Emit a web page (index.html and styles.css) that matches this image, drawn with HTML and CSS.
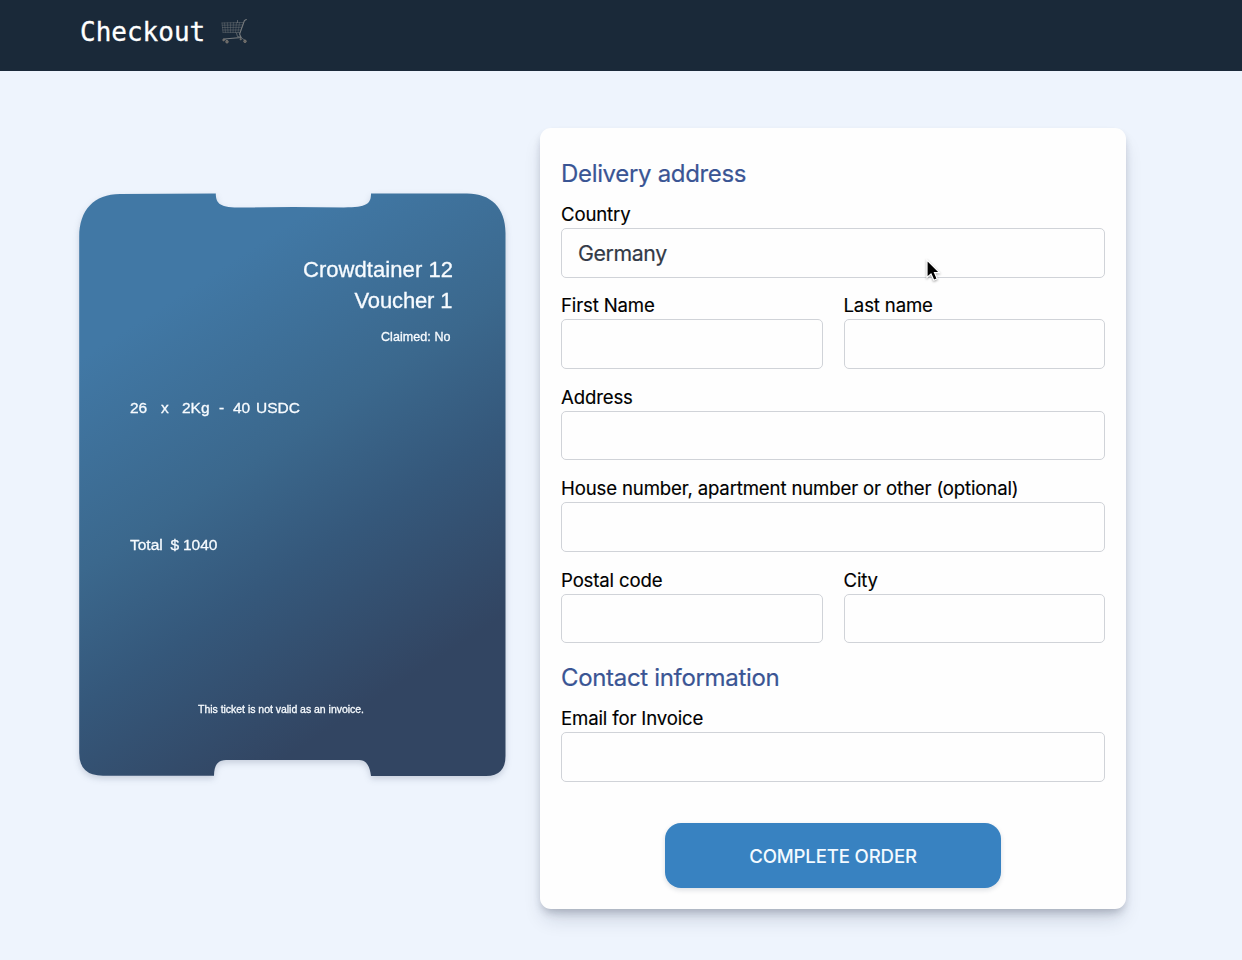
FILE: index.html
```html
<!DOCTYPE html>
<html lang="en">
<head>
<meta charset="utf-8">
<title>Checkout</title>
<link rel="stylesheet" href="styles.css">
</head>
<body>
<header class="topbar">
  <h1 class="topbar-title">Checkout</h1>
  <svg class="cart" viewBox="0 0 30 30" aria-hidden="true">
    <g fill="none" stroke="#777b7e" stroke-width="0.7" stroke-linecap="round">
      <path d="M27.3 3.5 L25.4 4.6 L20.6 18 L22 21.5 L5 23" stroke-width="1.1"/>
      <path d="M3 7 L24.3 6.5 M3.2 9.200 L24 8.9 M3.4 11.5 L23 11.3 M3.7 14 L22 14 M4 16.3 L21 16.5" opacity="0.65"/>
      <path d="M3 7 L4 16.3 M5.5 7 L6.5 16.3 M8.5 6.9 L9 16.3 M11.5 6.8 L11.5 16.4 M14.5 6.7 L14 16.4 M17.5 6.7 L16.5 16.5 M20.5 6.6 L19 16.5" opacity="0.55"/>
      <path d="M17.5 17 L18.5 20.5 L22 21 M18.5 4.5 V6.5 M22 21.5 L26.2 24.5 M5 23 L8 24.5"/>
    </g>
    <g fill="#626262" stroke="#857f79" stroke-width="0.7">
      <circle cx="4.6" cy="24" r="0.9"/><circle cx="8" cy="25.8" r="1.3"/><circle cx="21.7" cy="23.2" r="0.7"/><circle cx="26" cy="25.3" r="1.3"/>
    </g>
  </svg>
</header>
<main class="content">
  <svg class="ticket" viewBox="0 0 427 583" role="img" aria-label="Voucher">
    <defs>
      <linearGradient id="ticket-fill" gradientUnits="userSpaceOnUse" x1="0" y1="167" x2="243" y2="541">
        <stop offset="0" stop-color="#4178a5"/>
        <stop offset="0.4" stop-color="#3b688d"/>
        <stop offset="0.65" stop-color="#35587b"/>
        <stop offset="1" stop-color="#324562"/>
      </linearGradient>
    </defs>
    <path fill="url(#ticket-fill)" d="M41 1 L136.800 0.400 C137 11 141 14.500 163 14.500 Q214 13.500 265 14.500 C288 14.500 292 11 292 0.600 L388 0.600 C412 0.600 426.500 15 426.500 40 V563 Q426.500 583 407 583 H292 C291 574 288 567 280 567 H147 C139 567 135 572 135 582.700 H24 Q0.200 582.700 0.200 560 V44 C0.200 17 15 1 41 1 Z"/>
    <g class="ticket-text">
      <text x="224" y="84" font-size="22" textLength="150">Crowdtainer 12</text>
      <text x="275.500" y="115" font-size="22" textLength="98">Voucher 1</text>
      <text x="302" y="148" font-size="12.500" textLength="69.500" class="small">Claimed: No</text>
      <text y="220" font-size="15.500"><tspan x="51">26</tspan><tspan x="82">x</tspan><tspan x="103">2Kg</tspan><tspan x="140">-</tspan><tspan x="154">40</tspan><tspan x="177" textLength="44">USDC</tspan></text>
      <text y="356.500" font-size="15.500"><tspan x="51">Total</tspan><tspan x="91.500">$</tspan><tspan x="104">1040</tspan></text>
      <text x="119" y="520" font-size="10.500" textLength="166" class="small">This ticket is not valid as an invoice.</text>
    </g>
  </svg>
  <form class="card">
    <h2 class="section-title">Delivery address</h2>
    <div class="fields">
      <label class="field wide"><span class="label">Country</span><span class="input">Germany</span></label>
      <label class="field"><span class="label">First Name</span><span class="input"></span></label>
      <label class="field"><span class="label">Last name</span><span class="input"></span></label>
      <label class="field wide"><span class="label">Address</span><span class="input"></span></label>
      <label class="field wide"><span class="label">House number, apartment number or other (optional)</span><span class="input"></span></label>
      <label class="field"><span class="label">Postal code</span><span class="input"></span></label>
      <label class="field"><span class="label">City</span><span class="input"></span></label>
    </div>
    <h2 class="section-title contact">Contact information</h2>
    <div class="fields">
      <label class="field wide"><span class="label">Email for Invoice</span><span class="input"></span></label>
    </div>
    <button class="submit" type="button">COMPLETE ORDER</button>
  </form>
</main>
<svg class="cursor" viewBox="0 0 20 28" aria-hidden="true">
  <path d="M3 2 V19.500 L7 15.900 L9.800 22.200 L13.200 20.700 L10.500 14.600 H15.500 Z" fill="#000" stroke="#fff" stroke-width="1.200"/>
</svg>
</body>
</html>
```
FILE: styles.css
```css
* { box-sizing: border-box; }

body {
  margin: 0;
  height: 960px;
  overflow: hidden;
  background: #eef4fd;
  font-family: Inter, "Liberation Sans", sans-serif;
  color: #000;
}

.topbar {
  display: flex;
  align-items: flex-start;
  gap: 14px;
  height: 71px;
  padding: 16px 80px 0;
  background: #1a2939;
}

.topbar-title {
  margin: 0;
  font: 400 26px/32px "DejaVu Sans Mono", monospace;
  color: #fff;
  -webkit-text-stroke: 0.3px #fff;
}

.cart { width: 30px; height: 30px; }

.content {
  display: flex;
  align-items: flex-start;
  gap: 34px;
  padding: 57px 0 0 79px;
}

.ticket {
  flex: none;
  width: 427px;
  height: 583px;
  margin-top: 65px;
  overflow: visible;
  filter: drop-shadow(0 3px 3px rgba(30, 45, 80, 0.18));
}

.ticket-text {
  fill: #f7fbff;
  font-family: "Liberation Sans", Arial, sans-serif;
  stroke: #f7fbff;
  stroke-width: 0.3px;
}

.card {
  width: 586px;
  height: 781px;
  padding: 30px 21px 21px;
  border-radius: 11px;
  background: #fefefe;
  box-shadow: 0 13px 20px -4px rgba(20, 30, 60, 0.16), 0 5px 9px -2px rgba(20, 30, 50, 0.24);
}

.section-title {
  margin: 0 0 10.500px;
  font-size: 24px;
  font-weight: 400;
  line-height: 32.500px;
  letter-spacing: -0.330px;
  color: #3a5594;
  -webkit-text-stroke: 0.2px #3a5594;
}

.contact { margin-top: 19px; }

.fields {
  display: grid;
  grid-template-columns: 1fr 1fr;
  gap: 14.900px 21px;
}

.field { display: block; }
.wide { grid-column: 1 / -1; }

.label {
  display: block;
  height: 27px;
  font-size: 18.600px;
  line-height: 26px;
  letter-spacing: -0.150px;
  white-space: nowrap;
  -webkit-text-stroke: 0.15px #000;
}

.input {
  display: block;
  height: 49.500px;
  padding: 0 16px;
  border: 1px solid #d0d3d8;
  border-radius: 5px;
  background: #fefefe;
  font-size: 21.300px;
  line-height: 49px;
  letter-spacing: -0.400px;
  color: #333a47;
  -webkit-text-stroke: 0.2px #333a47;
}

.submit {
  display: block;
  width: 336px;
  height: 65px;
  margin: 41.500px auto 0;
  padding: 2px 0 0;
  border: 0;
  border-radius: 16px;
  background: #3882c1;
  box-shadow: 0 2px 5px rgba(20, 40, 70, 0.15);
  font: 500 18.600px/63px Inter, sans-serif;
  letter-spacing: -0.150px;
  color: #f3faff;
}

.cursor {
  position: absolute;
  left: 924px;
  top: 258px;
  width: 20px;
  height: 28px;
  filter: drop-shadow(0 1px 1px rgba(0, 0, 0, 0.35));
}
```
